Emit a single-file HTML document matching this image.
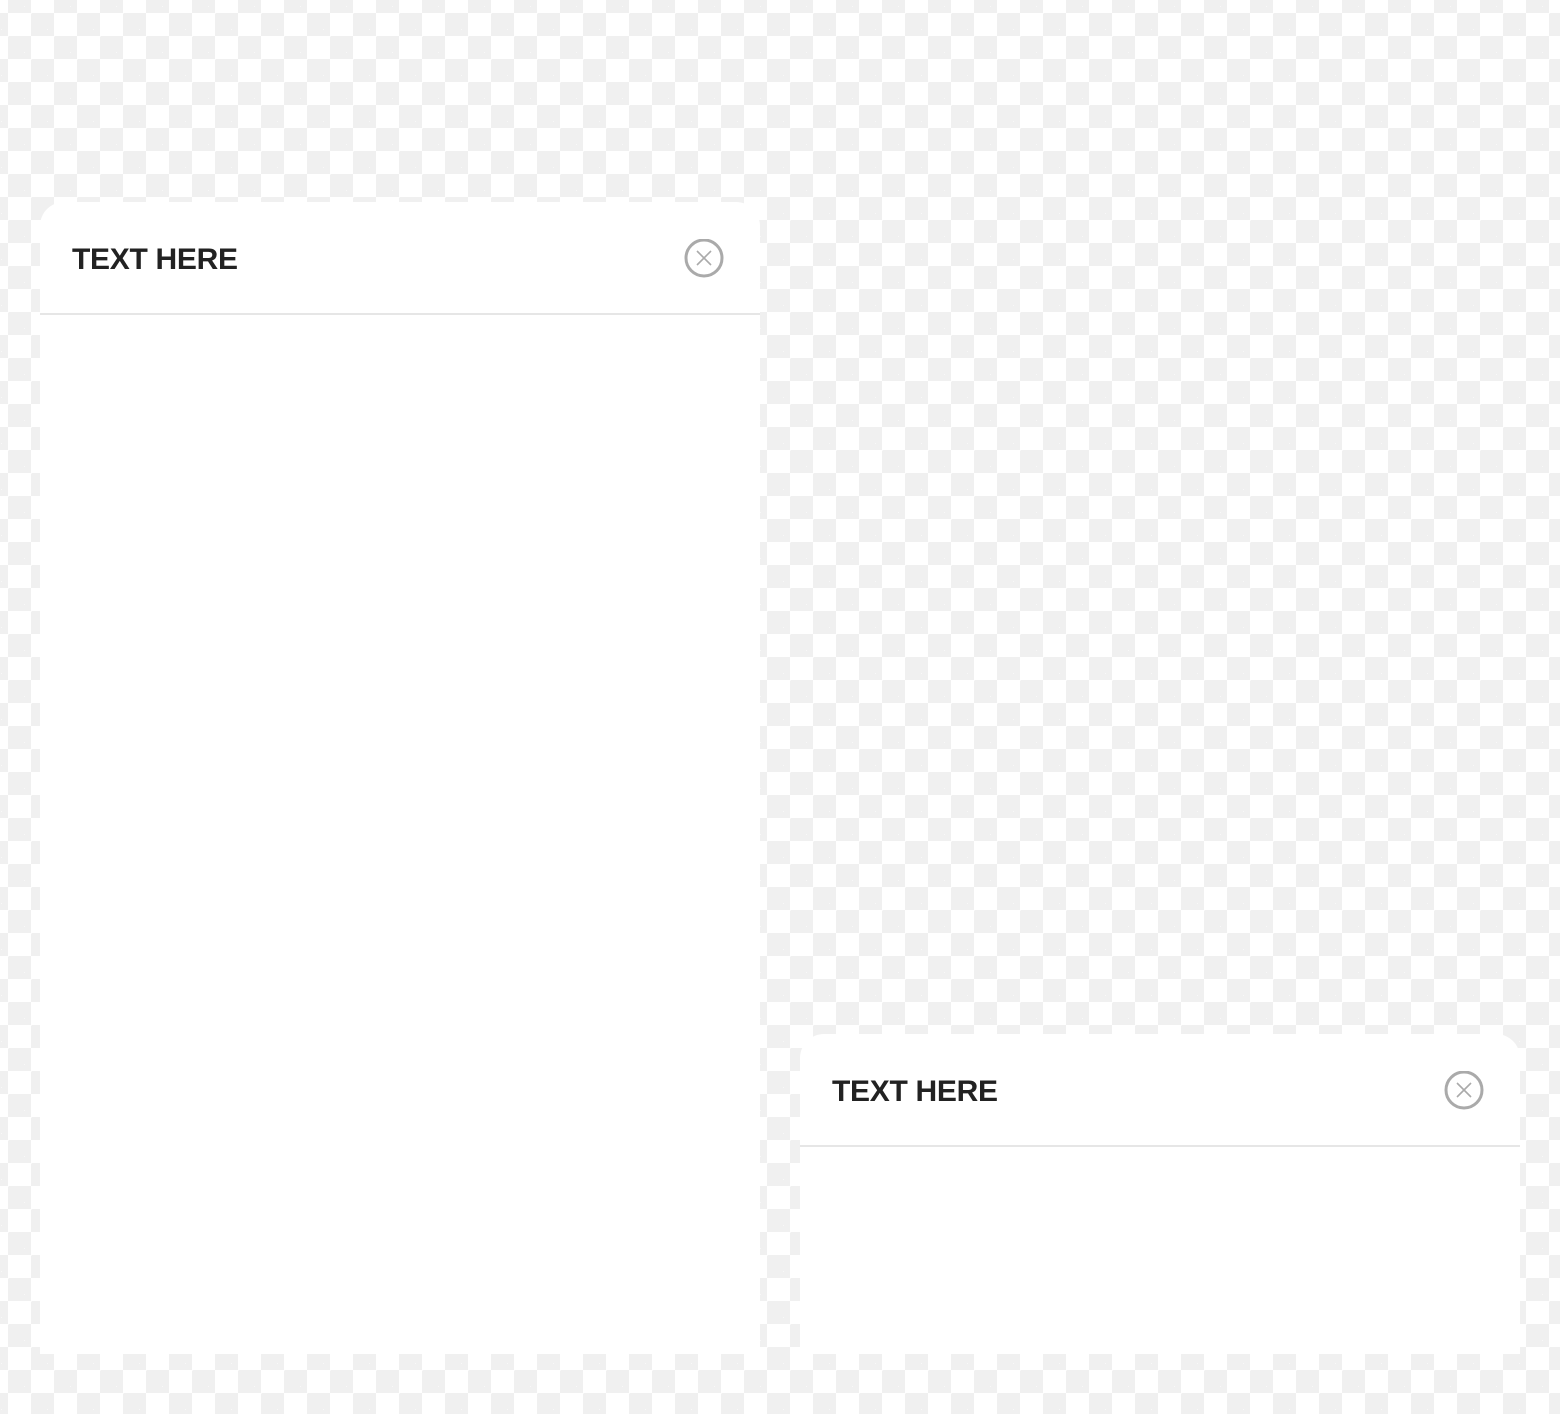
<!DOCTYPE html>
<html><head><meta charset="utf-8"><style>
html,body{margin:0;padding:0}
body{width:1560px;height:1414px;position:relative;overflow:hidden;
background-color:#fff;
background-image:
linear-gradient(45deg,#f0f0f0 25%,transparent 25%,transparent 75%,#f0f0f0 75%),
linear-gradient(45deg,#f0f0f0 25%,transparent 25%,transparent 75%,#f0f0f0 75%);
background-size:46px 46px;background-position:-15px -10px,8px 13px;
font-family:"Liberation Sans",sans-serif}
.p{position:absolute;background:#fff;border-radius:24px 24px 0 0;width:720px}
.h{height:111px;border-bottom:2px solid #e6e6e6;position:relative}
.t{position:absolute;left:32px;top:41px;font-size:30px;font-weight:bold;color:#222;letter-spacing:-0.3px}
.c{position:absolute;left:644px;top:37px}
</style></head><body>
<div class="p" style="left:40px;top:202px;height:1152px">
<div class="h"><div class="t">TEXT HERE</div>
<svg class="c" width="40" height="40" viewBox="0 0 40 40"><circle cx="20" cy="19" r="18" fill="none" stroke="#aaa" stroke-width="3"/><path d="M13 12L27 26M27 12L13 26" stroke="#aaa" stroke-width="1.6"/></svg></div>
</div>
<div class="p" style="left:800px;top:1034px;height:320px">
<div class="h"><div class="t">TEXT HERE</div>
<svg class="c" width="40" height="40" viewBox="0 0 40 40"><circle cx="20" cy="19" r="18" fill="none" stroke="#aaa" stroke-width="3"/><path d="M13 12L27 26M27 12L13 26" stroke="#aaa" stroke-width="1.6"/></svg></div>
</div>
</body></html>
